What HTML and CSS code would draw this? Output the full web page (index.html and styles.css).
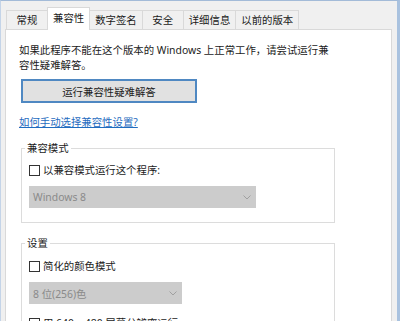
FILE: index.html
```html
<!DOCTYPE html>
<html lang="zh-CN">
<head>
    <meta charset="UTF-8">
    <title>属性 - 兼容性</title>
    <link rel="stylesheet" href="styles.css">
</head>
<body>
    <div class="window">
        <div class="tabs">
            <div class="tab">常规</div>
            <div class="tab active">兼容性</div>
            <div class="tab">数字签名</div>
            <div class="tab">安全</div>
            <div class="tab">详细信息</div>
            <div class="tab">以前的版本</div>
        </div>

        <div class="panel">
            <p class="intro">如果此程序不能在这个版本的 Windows 上正常工作，请尝试运行兼<br>容性疑难解答。</p>

            <button class="run-button">运行兼容性疑难解答</button>

            <a class="help-link" href="#">如何手动选择兼容性设置?</a>

            <fieldset class="group">
                <legend>兼容模式</legend>
                <label class="check first-row"><span class="box"></span>以兼容模式运行这个程序:</label>
                <div class="select wide">
                    <span>Windows 8</span>
                    <svg width="8" height="5" viewBox="0 0 8 5"><polyline points="0.5,0.5 4,4 7.5,0.5" fill="none" stroke="#a0a0a0" stroke-width="1"/></svg>
                </div>
            </fieldset>

            <fieldset class="group second">
                <legend>设置</legend>
                <label class="check first-row"><span class="box"></span>简化的颜色模式</label>
                <div class="select narrow">
                    <span>8 位(256)色</span>
                    <svg width="8" height="5" viewBox="0 0 8 5"><polyline points="0.5,0.5 4,4 7.5,0.5" fill="none" stroke="#a0a0a0" stroke-width="1"/></svg>
                </div>
                <label class="check last-row"><span class="box"></span>用 640 x 480 屏幕分辨率运行</label>
            </fieldset>
        </div>
    </div>
</body>
</html>
```

FILE: styles.css
```css
body {
    margin: 0;
    font-family: "Noto Sans", "Noto Sans CJK SC", sans-serif;
    font-size: 10.4px;
    color: #1b1b1b;
    background-color: #f0f0f0;
}
.window {
    box-sizing: border-box;
    width: 400px;
    height: 321px;
    overflow: hidden;
    border-top: 1px solid #a3bbd8;
    border-left: 1px solid #c4d4e8;
    border-right: 3px solid #a9c2df;
    background-color: #f0f0f0;
}
.tabs {
    display: flex;
    align-items: flex-end;
    height: 28px;
    margin-left: 4px;
    padding-left: 1px;
}
.tab {
    box-sizing: border-box;
    height: 19px;
    min-width: 42px;
    padding: 0 5px;
    line-height: 18px;
    text-align: center;
    border: 1px solid #d9d9d9;
    border-bottom: none;
    margin-right: -1px;
    background-color: #f0f0f0;
}
.tab.active {
    position: relative;
    height: 23px;
    margin-bottom: -1px;
    line-height: 20px;
    background-color: #fff;
}
.panel {
    height: 300px;
    margin: 0 5px 0 4px;
    padding: 13px 0 0 13px;
    background-color: #fff;
    border: 1px solid #d9d9d9;
}
.intro {
    margin: 0;
    line-height: 15px;
}
.run-button {
    display: block;
    box-sizing: border-box;
    width: 176px;
    height: 24px;
    margin: 6px 0 0 2px;
    padding: 0;
    font: inherit;
    color: #1b1b1b;
    background-color: #e1e1e1;
    border: 2px solid #4f88c2;
}
.help-link {
    display: inline-block;
    margin-top: 12px;
    line-height: 15px;
    color: #1f6cc0;
    text-decoration: underline;
}
.group {
    box-sizing: border-box;
    width: 314px;
    margin: 11px 0 0 2px;
    padding: 0 8px 14px 7px;
    border: 1px solid #dcdcdc;
}
.group.second {
    margin-top: 13px;
}
.group legend {
    margin-left: -4px;
    padding: 0 2px;
    line-height: 15px;
}
.check {
    display: flex;
    align-items: center;
    line-height: 15px;
}
.check.first-row {
    margin-top: 7px;
}
.group.second .check.first-row {
    margin-top: 8px;
}
.check.last-row {
    margin-top: 12px;
}
.box {
    box-sizing: border-box;
    width: 11px;
    height: 11px;
    margin-right: 3px;
    border: 1px solid #333;
    background-color: #fff;
}
.select {
    box-sizing: border-box;
    display: flex;
    align-items: center;
    justify-content: space-between;
    height: 22px;
    margin-top: 8px;
    padding: 0 5px 0 4px;
    color: #8a8a8a;
    background-color: #cccccc;
}
.select.wide {
    width: 227px;
}
.select.narrow {
    width: 153px;
}
```
